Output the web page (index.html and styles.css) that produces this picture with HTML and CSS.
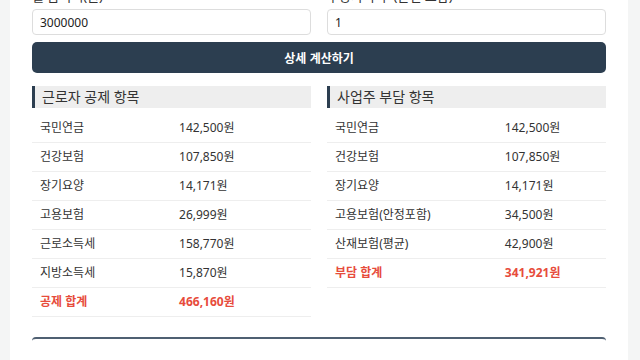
FILE: index.html
```html
<!DOCTYPE html>
<html lang="ko">
<head>
<meta charset="utf-8">
<link rel="stylesheet" href="styles.css">
</head>
<body>
<div class="card">
  <div class="inputs">
    <div class="field">
      <label class="label">월 급여액(원)</label>
      <input class="input" type="text" value="3000000">
    </div>
    <div class="field">
      <label class="label">부양가족 수 (본인 포함)</label>
      <input class="input" type="text" value="1">
    </div>
  </div>
  <button class="btn">상세 계산하기</button>
  <div class="sections">
    <div class="section">
      <h3 class="sec-title">근로자 공제 항목</h3>
      <table class="tbl">
        <tr><td>국민연금</td><td>142,500원</td></tr>
        <tr><td>건강보험</td><td>107,850원</td></tr>
        <tr><td>장기요양</td><td>14,171원</td></tr>
        <tr><td>고용보험</td><td>26,999원</td></tr>
        <tr><td>근로소득세</td><td>158,770원</td></tr>
        <tr><td>지방소득세</td><td>15,870원</td></tr>
        <tr class="total"><td>공제 합계</td><td>466,160원</td></tr>
      </table>
    </div>
    <div class="section">
      <h3 class="sec-title">사업주 부담 항목</h3>
      <table class="tbl">
        <tr><td>국민연금</td><td>142,500원</td></tr>
        <tr><td>건강보험</td><td>107,850원</td></tr>
        <tr><td>장기요양</td><td>14,171원</td></tr>
        <tr><td>고용보험(안정포함)</td><td>34,500원</td></tr>
        <tr><td>산재보험(평균)</td><td>42,900원</td></tr>
        <tr class="total"><td>부담 합계</td><td>341,921원</td></tr>
      </table>
    </div>
  </div>
  <div class="summary"></div>
</div>
</body>
</html>
```
FILE: styles.css
```css
* { box-sizing: border-box; }
html, body { margin: 0; padding: 0; }
body {
  background: #f4f5f5;
  font-family: "Noto Sans", "Noto Sans CJK KR", sans-serif;
  color: #333;
  overflow: hidden;
  height: 360px;
}
.card {
  background: #fff;
  margin: -13px 12px 0 10px;
  padding: 0 22px 40px;
}
.inputs {
  display: grid;
  grid-template-columns: 1fr 1fr;
  gap: 16px;
}
.field { display: flex; flex-direction: column; }
.label {
  font-size: 13px;
  line-height: 18px;
  font-weight: 400;
  color: #333;
  margin-bottom: 4px;
}
.input {
  height: 26px;
  border: 1px solid #ddd;
  border-radius: 4px;
  padding: 0 7px;
  font-family: "Noto Sans", "Noto Sans CJK KR", sans-serif;
  font-size: 12px;
  color: #222;
  outline: none;
}
.btn {
  display: block;
  width: 100%;
  height: 31px;
  margin-top: 7px;
  background: #2c3e50;
  color: #fff;
  border: none;
  border-radius: 5px;
  font-family: "Noto Sans CJK KR", sans-serif;
  font-size: 12px;
  font-weight: 700;
}
.sections {
  display: grid;
  grid-template-columns: 1fr 1fr;
  gap: 16px;
  margin-top: 13px;
  align-items: start;
}
.sec-title {
  margin: 0 0 6px;
  height: 22px;
  line-height: 22px;
  background: #eeeeee;
  border-left: 3px solid #2c3e50;
  padding-left: 7px;
  font-size: 14px;
  font-weight: 400;
  color: #333;
}
.tbl {
  width: 100%;
  border-collapse: collapse;
  font-size: 12px;
}
.tbl td {
  padding: 6px 8px;
  line-height: 16px;
  border-bottom: 1px solid #eee;
  color: #333;
  white-space: nowrap;
}
.tbl .total td {
  color: #e74c3c;
  font-weight: 700;
}
.summary {
  margin-top: 20px;
  height: 30px;
  border-top: 2px solid #4f6072;
  border-radius: 4px 4px 0 0;
}
```
